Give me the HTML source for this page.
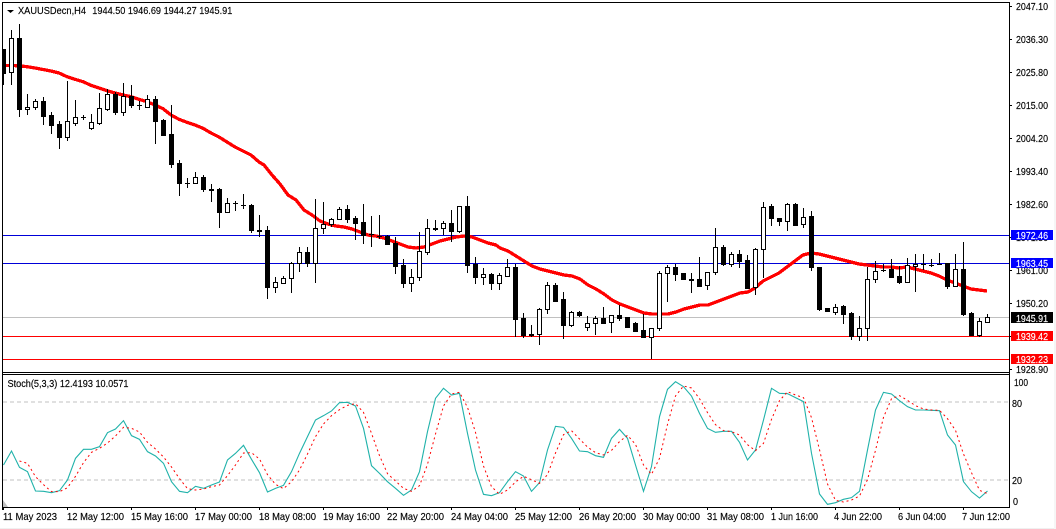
<!DOCTYPE html>
<html><head><meta charset="utf-8"><title>XAUUSDecn,H4</title>
<style>
html,body{margin:0;padding:0;background:#fff;width:1056px;height:529px;overflow:hidden}
svg{display:block}
text{font-family:"Liberation Sans",sans-serif;font-size:10.5px;fill:#000;stroke:#000;stroke-width:.15}
text.w{fill:#fff;stroke:#fff}
</style></head><body>
<svg width="1056" height="529" viewBox="0 0 1056 529" xmlns="http://www.w3.org/2000/svg">
<rect width="1056" height="529" fill="#fff"/>
<rect x="0" y="528" width="1056" height="1" fill="#f0f0f0"/>
<rect x="1054" y="0" width="2" height="529" fill="#f6f6f6"/>

<!-- horizontal lines -->
<g shape-rendering="crispEdges">
<rect x="3" y="235" width="1006" height="1" fill="#0000d8"/>
<rect x="3" y="263" width="1006" height="1" fill="#0000d8"/>
<rect x="3" y="317" width="1006" height="1" fill="#c0c0c0"/>
<rect x="3" y="336" width="1006" height="1" fill="#ff0000"/>
<rect x="3" y="359" width="1006" height="1" fill="#ff0000"/>
</g>

<!-- moving average -->
<path fill="none" stroke="#ff0000" stroke-width="3.3" stroke-linejoin="round" shape-rendering="crispEdges" d="M3 65.5L11 65.5L19 65.7L27 66.7L35 68L43 69.5L51 71L59 73L67 76.7L75 79.3L83 81.7L91 85.3L99 88L107 90.7L115 93L123 95L131 96.7L139 99.3L147 101.7L155 105L163 108.7L171 115L179 119.3L187 122.3L195 125L203 128.3L211 133L219 137L227 142L235 147L243 151L251 155L259 162L264 165L272 175L280 184L288 195L296 200L304 210L312 215L320 221L328 224L336 226L344 227L352 229L360 232L368 235L376 236L384 238L392 241L400 244L408 247L416 248L424 247L432 244L440 241L448 239L456 237L464 236L472 237L480 240L488 243L496 245L500 248L508 251L516 256L524 261L532 266L540 269L548 271L556 273L564 275L572 276L580 279L588 285L596 289L604 294L612 300L620 304L628 307L636 310L644 313L652 314L660 314L668 314L676 312L684 309L692 307L700 305L708 305L716 302L724 299L732 296L740 293L748 292L755 288L763 281L771 277L779 273L787 267L795 261L803 255L811 253L819 254L827 256L835 258L843 260L851 262L859 264L867 265L875 266L883 267L891 267L899 268L907 267L915 269L923 271L931 273L939 276L947 280L955 283L963 286L971 289L979 290L987 291"/>

<!-- candles -->
<g shape-rendering="crispEdges">
<path fill="none" stroke="#000" stroke-width="1" d="M3.5 49V85M11.5 30V85M19.5 24V117M27.5 94V115M35.5 99V110M43.5 97V125M51.5 112V134M59.5 121V149M67.5 81V141M75.5 100V126M83.5 115V120M91.5 114V130M99.5 93V125M107.5 89V111M115.5 92V115M123.5 83V116M131.5 85V108M139.5 101V110M147.5 95V107M155.5 96V144M163.5 119V135M171.5 105V168M179.5 160V196M187.5 178V188M195.5 172V183M203.5 175V192M211.5 184V202M219.5 188V228M227.5 198V213M235.5 201V211M243.5 194V209M251.5 204V233M259.5 215V237M267.5 226V299M275.5 277V293M283.5 276V283M291.5 262V293M299.5 247V272M307.5 247V267M315.5 199V283M323.5 202V234M331.5 218V227M339.5 207V220M347.5 205V223M355.5 216V240M363.5 204V244M371.5 216V247M379.5 215V239M387.5 235V245M395.5 237V274M403.5 259V288M411.5 269V292M419.5 232V281M427.5 219V255M435.5 220V231M443.5 221V235M451.5 210V242M459.5 206V233M467.5 196V273M475.5 257V284M483.5 268V285M491.5 273V290M499.5 273V290M507.5 259V277M515.5 264V337M523.5 313V338M531.5 325V337M539.5 308V345M547.5 282V314M555.5 283V302M563.5 292V339M571.5 311V327M579.5 311V317M587.5 316V331M595.5 316V335M603.5 307V324M611.5 315V333M619.5 305V321M635.5 322V332M643.5 314V338M651.5 328V359M659.5 271V331M667.5 265V302M675.5 264V281M683.5 273V279M691.5 273V293M699.5 257V287M707.5 272V290M715.5 228V275M723.5 245V266M731.5 252V267M739.5 250V268M747.5 255V289M755.5 248V295M763.5 202V278M771.5 204V226M779.5 218V226M787.5 203V231M795.5 203V226M803.5 208V228M811.5 211V271M819.5 267V311M827.5 308V312M835.5 304V315M843.5 305V324M851.5 312V340M859.5 316V341M867.5 267V341M875.5 261V283M883.5 264V272M891.5 259V277M899.5 266V284M907.5 258V282M915.5 254V292M923.5 254V270M931.5 259V267M939.5 253V264M947.5 263V289M955.5 254V287M963.5 242V316M971.5 312V336M979.5 318V337M987.5 314V323"/>
<path fill="#000" d="M3 49h3V74h-3zM17 38h5V110h-5zM41 101h5V117h-5zM49 115h5V126h-5zM57 124h5V138h-5zM113 94h5V113h-5zM129 96h5V106h-5zM153 99h5V122h-5zM161 120h5V136h-5zM169 134h5V165h-5zM177 163h5V184h-5zM201 177h5V190h-5zM217 189h5V213h-5zM249 205h5V231h-5zM265 230h5V288h-5zM305 252h5V264h-5zM345 209h5V220h-5zM353 218h5V224h-5zM361 222h5V236h-5zM385 236h5V245h-5zM393 243h5V267h-5zM401 265h5V284h-5zM449 223h5V232h-5zM465 206h5V266h-5zM473 264h5V278h-5zM489 274h5V284h-5zM513 267h5V320h-5zM521 318h5V336h-5zM553 285h5V302h-5zM561 299h5V326h-5zM577 312h5V316h-5zM601 318h5V324h-5zM617 315h5V319h-5zM625 317h5V328h-5zM633 323h5V332h-5zM641 330h5V338h-5zM673 267h5V275h-5zM681 273h5V280h-5zM697 279h5V287h-5zM721 247h5V265h-5zM737 254h5V262h-5zM745 260h5V289h-5zM769 206h5V219h-5zM777 218h5V222h-5zM793 204h5V226h-5zM809 216h5V268h-5zM817 267h5V310h-5zM825 308h5V312h-5zM841 306h5V315h-5zM849 313h5V337h-5zM889 269h5V278h-5zM897 276h5V283h-5zM945 263h5V287h-5zM961 269h5V315h-5zM969 313h5V336h-5z
M81 117h5v1h-5zM137 105h5v1h-5zM185 183h5v1h-5zM209 189h5v2h-5zM233 203h5v1h-5zM241 205h5v1h-5zM257 230h5v2h-5zM369 234h5v1h-5zM377 236h5v1h-5zM433 228h5v2h-5zM529 334h5v2h-5zM689 279h5v2h-5zM881 270h5v1h-5zM921 264h5v1h-5zM929 265h5v1h-5zM937 264h5v1h-5z"/>
<path fill="#fff" stroke="#000" stroke-width="1" d="M9.5 38.5h4V72.5h-4zM25.5 107.5h4V109.5h-4zM33.5 101.5h4V107.5h-4zM65.5 121.5h4V137.5h-4zM73.5 117.5h4V123.5h-4zM89.5 122.5h4V128.5h-4zM97.5 108.5h4V123.5h-4zM105.5 94.5h4V109.5h-4zM121.5 96.5h4V112.5h-4zM145.5 99.5h4V107.5h-4zM193.5 177.5h4V183.5h-4zM225.5 203.5h4V212.5h-4zM273.5 282.5h4V287.5h-4zM281.5 278.5h4V283.5h-4zM289.5 263.5h4V278.5h-4zM297.5 252.5h4V263.5h-4zM313.5 228.5h4V263.5h-4zM321.5 224.5h4V228.5h-4zM329.5 219.5h4V224.5h-4zM337.5 209.5h4V219.5h-4zM409.5 277.5h4V283.5h-4zM417.5 251.5h4V277.5h-4zM425.5 228.5h4V252.5h-4zM441.5 223.5h4V228.5h-4zM457.5 206.5h4V231.5h-4zM481.5 274.5h4V277.5h-4zM497.5 275.5h4V283.5h-4zM505.5 267.5h4V276.5h-4zM537.5 309.5h4V334.5h-4zM545.5 285.5h4V309.5h-4zM569.5 312.5h4V325.5h-4zM585.5 323.5h4V327.5h-4zM593.5 318.5h4V323.5h-4zM609.5 315.5h4V322.5h-4zM649.5 328.5h4V337.5h-4zM657.5 273.5h4V328.5h-4zM665.5 267.5h4V273.5h-4zM705.5 272.5h4V285.5h-4zM713.5 247.5h4V272.5h-4zM729.5 254.5h4V264.5h-4zM753.5 249.5h4V287.5h-4zM761.5 207.5h4V249.5h-4zM785.5 204.5h4V221.5h-4zM801.5 217.5h4V224.5h-4zM833.5 307.5h4V312.5h-4zM857.5 328.5h4V336.5h-4zM865.5 279.5h4V328.5h-4zM873.5 271.5h4V279.5h-4zM905.5 265.5h4V282.5h-4zM913.5 264.5h4V266.5h-4zM953.5 269.5h4V286.5h-4zM977.5 321.5h4V335.5h-4zM985.5 317.5h4V322.5h-4z"/>
</g>

<!-- frames -->
<g shape-rendering="crispEdges" fill="#000">
<rect x="2" y="2" width="1008" height="1"/>
<rect x="2" y="2" width="1" height="508"/>
<rect x="1009" y="2" width="1" height="506"/>
<rect x="2" y="372" width="1008" height="1"/>
<rect x="2" y="374" width="1008" height="1"/>
<rect x="2" y="507" width="1008" height="1"/>
<path d="M1009 6h3v1h-3zM1009 39h3v1h-3zM1009 72h3v1h-3zM1009 105h3v1h-3zM1009 138h3v1h-3zM1009 171h3v1h-3zM1009 204h3v1h-3zM1009 237h3v1h-3zM1009 270h3v1h-3zM1009 303h3v1h-3zM1009 336h3v1h-3zM1009 369h3v1h-3z"/>
<path d="M3 507h1v3h-1zM67 507h1v3h-1zM131 507h1v3h-1zM195 507h1v3h-1zM259 507h1v3h-1zM323 507h1v3h-1zM387 507h1v3h-1zM451 507h1v3h-1zM515 507h1v3h-1zM579 507h1v3h-1zM643 507h1v3h-1zM707 507h1v3h-1zM771 507h1v3h-1zM835 507h1v3h-1zM899 507h1v3h-1zM963 507h1v3h-1z"/>
</g>

<!-- title -->
<path d="M7 10h7l-3.5 3z" fill="#000"/>
<text x="18" y="14" textLength="68" lengthAdjust="spacingAndGlyphs">XAUUSDecn,H4</text>
<text x="92.3" y="14" textLength="140" lengthAdjust="spacingAndGlyphs">1944.50 1946.69 1944.27 1945.91</text>

<!-- price axis -->
<g>
<text x="1016" y="10" textLength="32" lengthAdjust="spacingAndGlyphs">2047.10</text>
<text x="1016" y="43" textLength="32" lengthAdjust="spacingAndGlyphs">2036.30</text>
<text x="1016" y="76" textLength="32" lengthAdjust="spacingAndGlyphs">2025.80</text>
<text x="1016" y="109" textLength="32" lengthAdjust="spacingAndGlyphs">2015.00</text>
<text x="1016" y="142" textLength="32" lengthAdjust="spacingAndGlyphs">2004.20</text>
<text x="1016" y="175" textLength="32" lengthAdjust="spacingAndGlyphs">1993.40</text>
<text x="1016" y="208" textLength="32" lengthAdjust="spacingAndGlyphs">1982.60</text>
<text x="1016" y="241" textLength="32" lengthAdjust="spacingAndGlyphs">1971.80</text>
<text x="1016" y="274" textLength="32" lengthAdjust="spacingAndGlyphs">1961.00</text>
<text x="1016" y="307" textLength="32" lengthAdjust="spacingAndGlyphs">1950.20</text>
<text x="1016" y="373" textLength="32" lengthAdjust="spacingAndGlyphs">1928.90</text>
</g>
<g shape-rendering="crispEdges">
<rect x="1011" y="230" width="42" height="10" fill="#0000ff"/>
<rect x="1011" y="258" width="42" height="10" fill="#0000ff"/>
<rect x="1011" y="312" width="42" height="11" fill="#000"/>
<rect x="1011" y="331" width="42" height="10" fill="#ff0000"/>
<rect x="1011" y="354" width="42" height="10" fill="#ff0000"/>
</g>
<text class="w" x="1016" y="239" textLength="32" lengthAdjust="spacingAndGlyphs">1972.46</text>
<text class="w" x="1016" y="267" textLength="32" lengthAdjust="spacingAndGlyphs">1963.45</text>
<text class="w" x="1016" y="322" textLength="32" lengthAdjust="spacingAndGlyphs">1945.91</text>
<text class="w" x="1016" y="340" textLength="32" lengthAdjust="spacingAndGlyphs">1939.42</text>
<text class="w" x="1016" y="363" textLength="32" lengthAdjust="spacingAndGlyphs">1932.23</text>

<!-- stoch -->
<text x="7.5" y="387" textLength="121" lengthAdjust="spacingAndGlyphs">Stoch(5,3,3) 12.4193 10.0571</text>
<path d="M3 402H1009M3 480H1009" stroke="#c0c0c0" stroke-width="1" stroke-dasharray="4 3" fill="none" shape-rendering="crispEdges"/>
<path d="M3 500V507H8z" fill="#c0c0c0"/>
<g transform="translate(3.5 370) scale(8 .33333)">
<path vector-effect="non-scaling-stroke" fill="none" stroke="#20b2aa" stroke-width="1.1" d="M0 285L1 243L2 292L3 305L4 363L5 364L6 368L7 362L8 330L9 265L10 238L11 238L12 230L13 188L14 177L15 152L16 197L17 208L18 245L19 258L20 280L21 335L22 364L23 368L24 349L25 355L26 345L27 336L28 270L29 250L30 226L31 268L32 308L33 366L34 355L35 346L36 305L37 250L38 200L39 150L40 137L41 123L42 98L43 97L44 108L45 175L46 287L47 310L48 335L49 355L50 376L51 360L52 305L53 185L54 85L55 55L56 75L57 70L58 190L59 300L60 373L61 377L62 368L63 335L64 305L65 318L66 364L67 338L68 240L69 169L70 172L71 205L72 243L73 245L74 257L75 262L76 205L77 178L78 205L79 285L80 364L81 290L82 140L83 58L84 35L85 50L86 78L87 130L88 175L89 187L90 184L91 184L92 217L93 270L94 240L95 150L96 55L97 70L98 71L99 83L100 95L101 250L102 372L103 403L104 398L105 388L106 383L107 364L108 240L109 120L110 67L111 72L112 92L113 110L114 120L115 120L116 121L117 122L118 195L119 225L120 335L121 365L122 384L123 363"/>
<path vector-effect="non-scaling-stroke" fill="none" stroke="#ff0000" stroke-width="1" stroke-dasharray="2 3" d="M2 273L3 280L4 320L5 344L6 365L7 365L8 353L9 319L10 278L11 247L12 235L13 219L14 198L15 172L16 175L17 186L18 217L19 237L20 261L21 291L22 326L23 356L24 360L25 357L26 350L27 345L28 317L29 285L30 249L31 248L32 267L33 314L34 343L35 356L36 335L37 300L38 252L39 200L40 162L41 137L42 119L43 106L44 101L45 127L46 190L47 257L48 311L49 333L50 355L51 364L52 347L53 283L54 192L55 108L56 72L57 67L58 112L59 187L60 288L61 350L62 373L63 360L64 336L65 319L66 329L67 340L68 314L69 249L70 194L71 182L72 207L73 231L74 248L75 255L76 241L77 215L78 196L79 223L80 285L81 313L82 265L83 163L84 78L85 48L86 54L87 86L88 128L89 164L90 182L91 185L92 195L93 224L94 242L95 220L96 148L97 92L98 65L99 75L100 83L101 143L102 239L103 342L104 391L105 396L106 390L107 378L108 329L109 241L110 142L111 86L112 77L113 91L114 107L115 117L116 120L117 121L118 146L119 181L120 252L121 308L122 361L123 371"/>
</g>
<text x="1014" y="386" textLength="14" lengthAdjust="spacingAndGlyphs">100</text>
<text x="1012" y="407" textLength="10" lengthAdjust="spacingAndGlyphs">80</text>
<text x="1012" y="484" textLength="10" lengthAdjust="spacingAndGlyphs">20</text>
<text x="1013" y="505" textLength="5" lengthAdjust="spacingAndGlyphs">0</text>

<!-- time axis -->
<g>
<text x="3" y="520" textLength="54" lengthAdjust="spacingAndGlyphs">11 May 2023</text>
<text x="67" y="520" textLength="57" lengthAdjust="spacingAndGlyphs">12 May 12:00</text>
<text x="131" y="520" textLength="57" lengthAdjust="spacingAndGlyphs">15 May 16:00</text>
<text x="195" y="520" textLength="57" lengthAdjust="spacingAndGlyphs">17 May 00:00</text>
<text x="259" y="520" textLength="57" lengthAdjust="spacingAndGlyphs">18 May 08:00</text>
<text x="323" y="520" textLength="57" lengthAdjust="spacingAndGlyphs">19 May 16:00</text>
<text x="387" y="520" textLength="57" lengthAdjust="spacingAndGlyphs">22 May 20:00</text>
<text x="451" y="520" textLength="57" lengthAdjust="spacingAndGlyphs">24 May 04:00</text>
<text x="515" y="520" textLength="57" lengthAdjust="spacingAndGlyphs">25 May 12:00</text>
<text x="579" y="520" textLength="57" lengthAdjust="spacingAndGlyphs">26 May 20:00</text>
<text x="643" y="520" textLength="57" lengthAdjust="spacingAndGlyphs">30 May 00:00</text>
<text x="707" y="520" textLength="57" lengthAdjust="spacingAndGlyphs">31 May 08:00</text>
<text x="771" y="520" textLength="47" lengthAdjust="spacingAndGlyphs">1 Jun 16:00</text>
<text x="834" y="520" textLength="48" lengthAdjust="spacingAndGlyphs">4 Jun 22:00</text>
<text x="898" y="520" textLength="48" lengthAdjust="spacingAndGlyphs">6 Jun 04:00</text>
<text x="962" y="520" textLength="48" lengthAdjust="spacingAndGlyphs">7 Jun 12:00</text>
</g>
</svg>
</body></html>
